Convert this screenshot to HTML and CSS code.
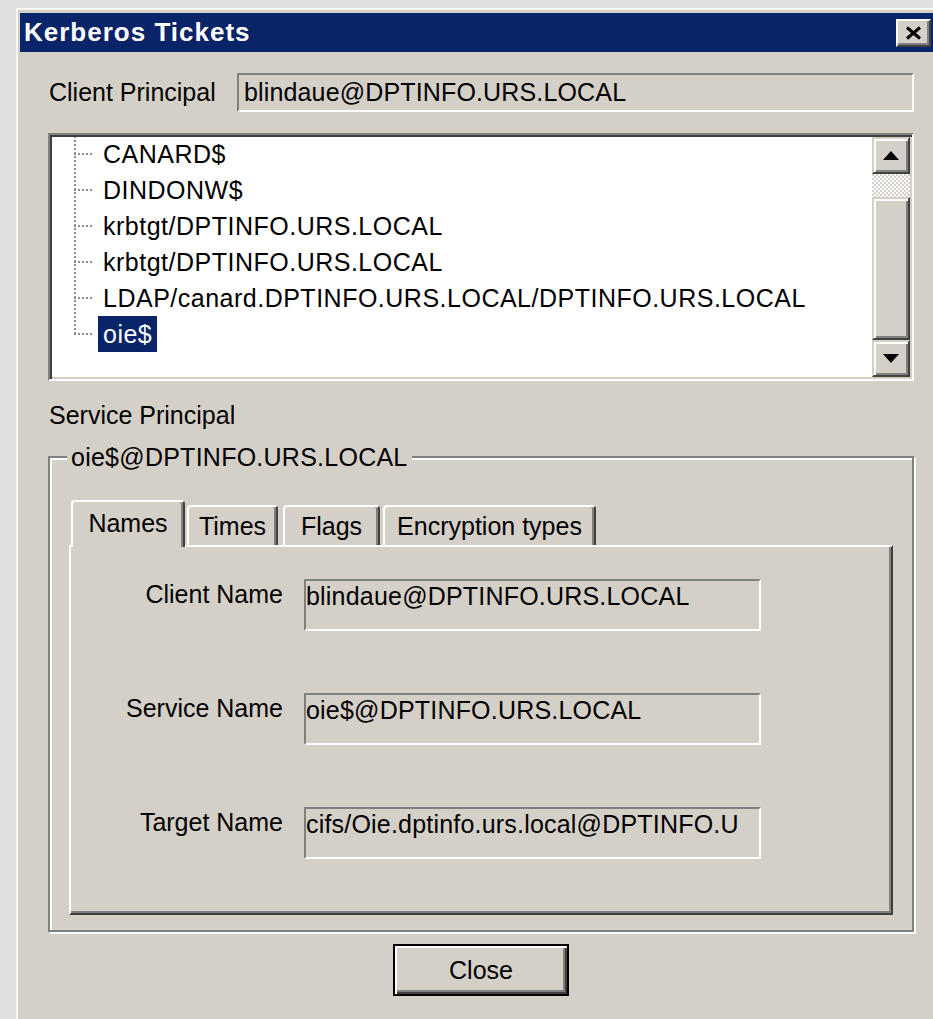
FILE: index.html
```html
<!DOCTYPE html>
<html lang="en">
<head>
<meta charset="utf-8">
<title>Kerberos Tickets</title>
<link rel="stylesheet" href="styles.css">
</head>
<body>
<div class="dialog">
  <div class="titlebar">
    <span class="title">Kerberos Tickets</span>
    <button class="title-close" aria-label="Close">
      <svg width="19" height="14" viewBox="0 0 19 14"><path d="M3 1.5 L16 12.5 M16 1.5 L3 12.5" stroke="#000" stroke-width="3" fill="none"/></svg>
    </button>
  </div>

  <div class="content">
    <div class="principal-row">
      <span class="label">Client Principal</span>
      <div class="field field-single">blindaue@DPTINFO.URS.LOCAL</div>
    </div>

    <div class="tree">
      <ul class="tree-items">
        <li>CANARD$</li>
        <li>DINDONW$</li>
        <li>krbtgt/DPTINFO.URS.LOCAL</li>
        <li>krbtgt/DPTINFO.URS.LOCAL</li>
        <li>LDAP/canard.DPTINFO.URS.LOCAL/DPTINFO.URS.LOCAL</li>
        <li class="last"><span class="selected">oie$</span></li>
      </ul>
      <div class="scrollbar">
        <div class="sb-btn">
          <svg width="16" height="9" viewBox="0 0 16 9"><path d="M8 0 L16 9 L0 9 Z" fill="#000"/></svg>
        </div>
        <div class="sb-track"></div>
        <div class="sb-thumb"></div>
        <div class="sb-btn">
          <svg width="16" height="9" viewBox="0 0 16 9"><path d="M0 0 L16 0 L8 9 Z" fill="#000"/></svg>
        </div>
      </div>
    </div>

    <div class="section-label">Service Principal</div>

    <fieldset class="group">
      <legend>oie$@DPTINFO.URS.LOCAL</legend>
      <div class="tabs">
        <div class="tab active tab-names">Names</div>
        <div class="tab tab-times">Times</div>
        <div class="tab tab-flags">Flags</div>
        <div class="tab tab-enc">Encryption types</div>
      </div>
      <div class="tab-panel">
        <div class="name-row">
          <span class="name-label">Client Name</span>
          <div class="field field-tall">blindaue@DPTINFO.URS.LOCAL</div>
        </div>
        <div class="name-row">
          <span class="name-label">Service Name</span>
          <div class="field field-tall">oie$@DPTINFO.URS.LOCAL</div>
        </div>
        <div class="name-row">
          <span class="name-label">Target Name</span>
          <div class="field field-tall">cifs/Oie.dptinfo.urs.local@DPTINFO.U</div>
        </div>
      </div>
    </fieldset>

    <div class="actions">
      <button class="btn-default">Close</button>
    </div>
  </div>
</div>
</body>
</html>
```

FILE: styles.css
```css
html, body {
  margin: 0;
  height: 100%;
}

body {
  background: #e0e0e0;
  padding: 8px 0 0 16px;
  box-sizing: border-box;
  overflow: hidden;
  font-family: "Liberation Sans", Arial, sans-serif;
  font-size: 25px;
  color: #000;
}

/* window frame */
.dialog {
  box-sizing: border-box;
  width: 917px;
  height: 1011px;
  background: #d4d0c8;
  border-top: 2px solid #f6f6f6;
  border-left: 2px solid #f6f6f6;
  padding: 3px 0 0 2px;
  overflow: hidden;
}

.titlebar {
  height: 39px;
  background: #0a246a;
  display: flex;
  align-items: center;
  justify-content: space-between;
  padding: 0 2px 0 4px;
}

.title {
  color: #fff;
  font-weight: bold;
  font-size: 26px;
  letter-spacing: 1px;
}

.title-close {
  box-sizing: border-box;
  width: 35px;
  height: 28px;
  margin: 0;
  padding: 0;
  background: #d4d0c8;
  border: 2px solid;
  border-color: #fff #404040 #404040 #fff;
  box-shadow: inset -2px -2px 0 #808080;
  display: flex;
  align-items: center;
  justify-content: center;
}

.content {
  padding: 21px 19px 0 28px;
}

/* sunken read-only edit */
.field {
  box-sizing: border-box;
  border: 2px solid;
  border-color: #808080 #fff #fff #808080;
  background: #d4d0c8;
  white-space: nowrap;
  overflow: hidden;
}

.principal-row {
  display: flex;
  align-items: center;
}

.label {
  width: 189px;
  padding-left: 1px;
  box-sizing: border-box;
}

.field-single {
  flex: 1;
  height: 39px;
  line-height: 35px;
  padding-left: 5px;
  letter-spacing: 0.15px;
}

/* tree view */
.tree {
  margin-top: 21px;
  height: 248px;
  box-sizing: border-box;
  border: 2px solid;
  border-color: #808080 #fff #fff #808080;
  padding: 2px;
  background: #fff;
  box-shadow: inset 2px 2px 0 #404040, inset -2px -2px 0 #d4d0c8;
  display: flex;
}

.tree-items {
  flex: 1;
  list-style: none;
  margin: 0;
  padding: 0;
  overflow: hidden;
  letter-spacing: 0.5px;
}

.tree-items li {
  height: 36px;
  line-height: 36px;
  padding-left: 51px;
  white-space: nowrap;
  background:
    repeating-linear-gradient(to bottom, #8c8c8c 0 2px, transparent 2px 4px) 22px 0 / 2px 100% no-repeat,
    repeating-linear-gradient(to right, #8c8c8c 0 2px, transparent 2px 4px) 22px 17px / 20px 2px no-repeat;
}

.tree-items li:first-child {
  margin-top: -1px;
}

.tree-items li.last {
  background:
    repeating-linear-gradient(to bottom, #8c8c8c 0 2px, transparent 2px 4px) 22px 0 / 2px 19px no-repeat,
    repeating-linear-gradient(to right, #8c8c8c 0 2px, transparent 2px 4px) 22px 17px / 20px 2px no-repeat;
}

.selected {
  display: inline-block;
  background: #0a246a;
  color: #fff;
  padding: 0 5px;
  margin-left: -5px;
}

.scrollbar {
  width: 38px;
  display: flex;
  flex-direction: column;
}

.sb-btn,
.sb-thumb {
  box-sizing: border-box;
  background: #d4d0c8;
  border: 2px solid;
  border-color: #d4d0c8 #404040 #404040 #d4d0c8;
  box-shadow: inset 2px 2px 0 #fff, inset -2px -2px 0 #808080;
}

.sb-btn {
  height: 37px;
  display: flex;
  align-items: center;
  justify-content: center;
}

.sb-track {
  height: 23px;
  background: repeating-conic-gradient(#fff 0 25%, #d4d0c8 0 50%) 0 0 / 4px 4px;
}

.sb-thumb {
  height: 143px;
}

.section-label {
  margin-top: 19px;
  line-height: 30px;
  padding-left: 1px;
}

/* etched group box */
.group {
  margin: 12px 0 0 0;
  padding: 28px 19px 15px 19px;
  min-inline-size: 0;
  border: 2px solid #808080;
  box-shadow: inset 2px 2px 0 #fff, 2px 2px 0 #fff;
}

.group legend {
  margin-left: -2px;
  padding: 0 4px;
  line-height: 30px;
  letter-spacing: 0.25px;
  background: #d4d0c8;
}

/* tab control */
.tabs {
  display: flex;
  align-items: flex-end;
  padding-left: 2px;
}

.tab {
  box-sizing: border-box;
  height: 40px;
  line-height: 38px;
  text-align: center;
  background: #d4d0c8;
  border-top: 2px solid #fff;
  border-left: 2px solid #fff;
  border-right: 2px solid #404040;
  box-shadow: inset -2px 0 0 #808080;
  border-radius: 4px 4px 0 0;
}

.tab.active {
  height: 47px;
  line-height: 43px;
  margin-bottom: -2px;
  position: relative;
  z-index: 1;
}

.tab-names { width: 114px; }
.tab-times { width: 91px; margin-left: 2px; }
.tab-flags { width: 97px; margin-left: 5px; }
.tab-enc   { width: 213px; margin-left: 3px; }

.tab-panel {
  box-sizing: border-box;
  height: 370px;
  border: 2px solid;
  border-color: #fff #404040 #404040 #fff;
  box-shadow: inset -2px -2px 0 #808080;
  padding-top: 32px;
}

.name-row {
  display: flex;
  align-items: flex-start;
  gap: 21px;
  margin-bottom: 62px;
}

.name-label {
  width: 212px;
  text-align: right;
  line-height: 30px;
}

.field-tall {
  width: 457px;
  height: 52px;
  line-height: 30px;
  padding-left: 0;
  letter-spacing: 0.2px;
}

/* dialog buttons */
.actions {
  margin-top: 12px;
  display: flex;
  justify-content: center;
}

.btn-default {
  box-sizing: border-box;
  width: 176px;
  height: 52px;
  margin: 0;
  padding: 0;
  font: inherit;
  color: #000;
  background: #d4d0c8;
  border: 2px solid #000;
  box-shadow: inset 2px 2px 0 #fff, inset -2px -2px 0 #404040, inset -4px -4px 0 #808080;
}
```
